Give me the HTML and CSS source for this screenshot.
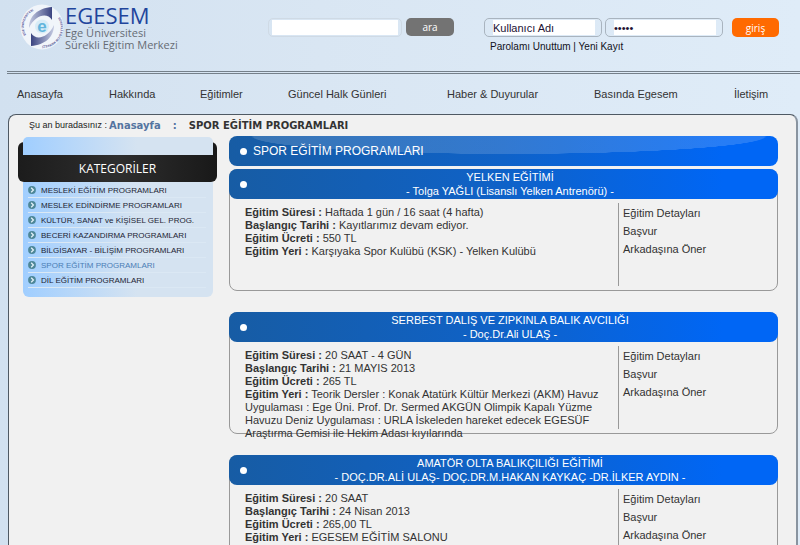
FILE: index.html
```html
<!DOCTYPE html>
<html lang="tr">
<head>
    <meta charset="UTF-8">
    <meta name="viewport" content="width=device-width, initial-scale=1.0">
    <title>EGESEM - Spor Eğitim Programları</title>
    <link rel="stylesheet" href="styles.css">
</head>
<body>
    <svg class="hidden" aria-hidden="true">
        <symbol id="arrow" viewBox="0 0 8 8">
            <circle cx="4" cy="4" r="3.9" fill="#4d8798"/>
            <path d="M3.200 1.800L5.400 4 3.200 6.200" fill="none" stroke="#e3f1f8" stroke-width="1.3"/>
        </symbol>
    </svg>

    <header class="header">
        <a class="logo" href="#">
            <svg class="logo-mark" viewBox="0 0 44 46" aria-hidden="true">
                <defs>
                    <linearGradient id="swoosh1" x1="0" y1="0" x2="1" y2="0">
                        <stop offset="0" stop-color="#c5cbe2"/>
                        <stop offset="1" stop-color="#3b4480"/>
                    </linearGradient>
                    <linearGradient id="swoosh2" x1="0" y1="0" x2="1" y2="0">
                        <stop offset="0" stop-color="#3b4480"/>
                        <stop offset="1" stop-color="#c5cbe2"/>
                    </linearGradient>
                    <path id="arcTop" d="M6 31A17.500 17.500 0 0 1 22 5"/>
                    <path id="arcBottom" d="M38 14A18 18 0 0 1 18 41"/>
                </defs>
                <ellipse cx="22" cy="23" rx="21.5" ry="22.5" fill="#f1f5fa"/>
                <path d="M9 24C9 12 18 4 32 3V16C27 8 15 11 9 24z" fill="url(#swoosh1)"/>
                <path d="M34 21C34 33 25 41 11 42V29C16 37 28 34 34 21z" fill="url(#swoosh2)"/>
                <circle cx="22" cy="22.500" r="7" fill="#d8ecf7"/>
                <text class="mark-e" x="22" y="28" text-anchor="middle">e</text>
                <text class="mark-ring"><textPath href="#arcTop">EGE ÜNİVERSİTESİ</textPath></text>
                <text class="mark-ring"><textPath href="#arcBottom">SÜREKLİ EĞİTİM MERKEZİ</textPath></text>
            </svg>
            <span class="logo-text">
                <strong>EGESEM</strong>
                <span>Ege Üniversitesi</span>
                <span>Sürekli Eğitim Merkezi</span>
            </span>
        </a>

        <form class="search">
            <div class="field field-search"><input type="text" aria-label="Arama"></div>
            <button class="btn-search" type="button">ara</button>
        </form>

        <form class="login">
            <div class="login-row">
                <div class="field"><input type="text" value="Kullanıcı Adı" aria-label="Kullanıcı Adı"></div>
                <div class="field field-pass"><input type="password" value="12345" aria-label="Parola"></div>
                <button class="btn-login" type="button">giriş</button>
            </div>
            <p class="login-links"><a href="#">Parolamı Unuttum</a> | <a href="#">Yeni Kayıt</a></p>
        </form>
    </header>

    <nav class="menu">
        <a href="#">Anasayfa</a>
        <a href="#">Hakkında</a>
        <a href="#">Eğitimler</a>
        <a href="#">Güncel Halk Günleri</a>
        <a href="#">Haber &amp; Duyurular</a>
        <a href="#">Basında Egesem</a>
        <a href="#">İletişim</a>
    </nav>

    <div class="page">
        <div class="breadcrumb">
            <span class="here">Şu an buradasınız :</span>
            <a href="#">Anasayfa</a>
            <span class="sep">:</span>
            <strong>SPOR EĞİTİM PROGRAMLARI</strong>
        </div>

        <div class="columns">
            <aside class="sidebar">
                <h2>KATEGORİLER</h2>
                <ul>
                    <li><svg><use href="#arrow"/></svg><a href="#">MESLEKİ EĞİTİM PROGRAMLARI</a></li>
                    <li><svg><use href="#arrow"/></svg><a href="#">MESLEK EDİNDİRME PROGRAMLARI</a></li>
                    <li><svg><use href="#arrow"/></svg><a href="#">KÜLTÜR, SANAT ve KİŞİSEL GEL. PROG.</a></li>
                    <li><svg><use href="#arrow"/></svg><a href="#">BECERİ KAZANDIRMA PROGRAMLARI</a></li>
                    <li><svg><use href="#arrow"/></svg><a href="#">BİLGİSAYAR - BİLİŞİM PROGRAMLARI</a></li>
                    <li><svg><use href="#arrow"/></svg><a class="active" href="#">SPOR EĞİTİM PROGRAMLARI</a></li>
                    <li><svg><use href="#arrow"/></svg><a href="#">DİL EĞİTİM PROGRAMLARI</a></li>
                </ul>
            </aside>

            <main class="content">
                <h1 class="title"><span class="dot"></span>SPOR EĞİTİM PROGRAMLARI</h1>

                <article class="course">
                    <header>
                        <span class="dot"></span>
                        <h3>YELKEN EĞİTİMİ<br>- Tolga YAĞLI (Lisanslı Yelken Antrenörü) -</h3>
                    </header>
                    <div class="course-body">
                        <div class="info">
                            <p><b>Eğitim Süresi :</b> Haftada 1 gün / 16 saat (4 hafta)</p>
                            <p><b>Başlangıç Tarihi :</b> Kayıtlarımız devam ediyor.</p>
                            <p><b>Eğitim Ücreti :</b> 550 TL</p>
                            <p><b>Eğitim Yeri :</b> Karşıyaka Spor Kulübü (KSK) - Yelken Kulübü</p>
                        </div>
                        <div class="links">
                            <a href="#">Eğitim Detayları</a>
                            <a href="#">Başvur</a>
                            <a href="#">Arkadaşına Öner</a>
                        </div>
                    </div>
                </article>

                <article class="course">
                    <header>
                        <span class="dot"></span>
                        <h3>SERBEST DALIŞ VE ZIPKINLA BALIK AVCILIĞI<br>- Doç.Dr.Ali ULAŞ -</h3>
                    </header>
                    <div class="course-body">
                        <div class="info">
                            <p><b>Eğitim Süresi :</b> 20 SAAT - 4 GÜN</p>
                            <p><b>Başlangıç Tarihi :</b> 21 MAYIS 2013</p>
                            <p><b>Eğitim Ücreti :</b> 265 TL</p>
                            <p><b>Eğitim Yeri :</b> Teorik Dersler : Konak Atatürk Kültür Merkezi (AKM) Havuz Uygulaması : Ege Üni. Prof. Dr. Sermed AKGÜN Olimpik Kapalı Yüzme Havuzu Deniz Uygulaması : URLA İskeleden hareket edecek EGESÜF Araştırma Gemisi ile Hekim Adası kıyılarında</p>
                        </div>
                        <div class="links">
                            <a href="#">Eğitim Detayları</a>
                            <a href="#">Başvur</a>
                            <a href="#">Arkadaşına Öner</a>
                        </div>
                    </div>
                </article>

                <article class="course">
                    <header>
                        <span class="dot"></span>
                        <h3>AMATÖR OLTA BALIKÇILIĞI EĞİTİMİ<br>- DOÇ.DR.ALİ ULAŞ- DOÇ.DR.M.HAKAN KAYKAÇ -DR.İLKER AYDIN -</h3>
                    </header>
                    <div class="course-body">
                        <div class="info">
                            <p><b>Eğitim Süresi :</b> 20 SAAT</p>
                            <p><b>Başlangıç Tarihi :</b> 24 Nisan 2013</p>
                            <p><b>Eğitim Ücreti :</b> 265,00 TL</p>
                            <p><b>Eğitim Yeri :</b> EGESEM EĞİTİM SALONU</p>
                        </div>
                        <div class="links">
                            <a href="#">Eğitim Detayları</a>
                            <a href="#">Başvur</a>
                            <a href="#">Arkadaşına Öner</a>
                        </div>
                    </div>
                </article>
            </main>
        </div>
    </div>
</body>
</html>
```

FILE: styles.css
```css
* {
    padding: 0;
    margin: 0;
    box-sizing: border-box;
}

:root {
    --text: #333333;
    --panel: #f1f1f1;
    --bar: linear-gradient(to right, #175ca4, #0f62c8 50%, #0066f5 90%);
}

body {
    font-family: "Liberation Sans", Arial, sans-serif;
    font-size: 11px;
    color: var(--text);
    background: linear-gradient(to right, #d2e1f0, #d9e6f3 40%, #dfecf8);
}

a {
    color: inherit;
    text-decoration: none;
}

ul {
    list-style: none;
}

.hidden {
    display: none;
}

/* header */
.header {
    display: flex;
    align-items: flex-start;
    height: 74px;
    margin-left: 7px;
    padding: 4px 21px 0 13px;
    border-bottom: 3px double #75808a;
}

.logo {
    display: flex;
    flex: 1;
    gap: 1px;
}

.logo-mark {
    width: 44px;
    height: 46px;
    overflow: visible;
}

.mark-e {
    font-size: 17px;
    font-weight: bold;
    fill: #62b5dc;
}

.mark-ring {
    font-size: 3px;
    font-weight: bold;
    fill: #4a4a90;
}

.logo-text {
    display: flex;
    flex-direction: column;
    font-family: "Open Sans", sans-serif;
    font-size: 11px;
    line-height: 12px;
    color: #666c74;
}

.logo-text strong {
    font-size: 22px;
    font-weight: normal;
    line-height: 23px;
    color: #1f459c;
}

.search {
    display: flex;
    gap: 4px;
    margin: 14px 30px 0 0;
}

.field {
    width: 118px;
    height: 19px;
    padding: 1px 6px 1px 8px;
    border: 1px solid #a9b4bf;
    border-radius: 5px;
}

.field input {
    display: block;
    width: 100%;
    height: 15px;
    border: none;
    background-color: #ffffff;
    font-family: inherit;
    font-size: 11px;
    color: #221133;
}

.field-search {
    width: 134px;
    padding: 1px 3px;
    border-color: #cfdae5;
}

button {
    height: 18px;
    border: none;
    border-radius: 5px;
    font-family: "Open Sans", sans-serif;
    font-size: 10px;
    line-height: 16px;
    color: #ffffff;
}

.btn-search {
    width: 48px;
    background-color: #737373;
}

.login {
    margin-top: 14px;
}

.login-row {
    display: flex;
    gap: 3px;
}

.btn-login {
    width: 47px;
    height: 19px;
    margin-left: 6px;
    background-color: #ff6a00;
}

.login-links {
    margin: 4px 0 0 6px;
    font-size: 10px;
    line-height: 12px;
    color: #111122;
}

/* menu */
.menu {
    display: grid;
    grid-template-columns: 92fr 91fr 88fr 159fr 147fr 140fr 66fr;
    padding: 0 0 0 17px;
    line-height: 40px;
    height: 40px;
}

/* page */
.page {
    margin: 0 2px 0 8px;
    padding: 4px 18px 20px 9px;
    border: 1px solid #4f5963;
    border-right: 2px solid #8994a0;
    border-bottom: none;
    border-radius: 8px 8px 0 0;
    background-color: var(--panel);
}

.breadcrumb {
    display: flex;
    align-items: center;
    height: 12px;
    padding-left: 11px;
    font-family: "DejaVu Sans", Verdana, sans-serif;
    font-size: 10px;
    font-weight: bold;
}

.breadcrumb .here {
    margin-right: 2px;
    font-family: "Liberation Sans", Arial, sans-serif;
    font-size: 9px;
    font-weight: normal;
    color: #222222;
}

.breadcrumb a,
.breadcrumb .sep {
    margin-right: 12px;
    color: #5474a0;
}

.columns {
    display: flex;
    align-items: flex-start;
    gap: 12px;
    padding-top: 5px;
}

/* sidebar */
.sidebar {
    width: 199px;
    padding-top: 6px;
}

.sidebar h2 {
    position: relative;
    height: 40px;
    padding-top: 13px;
    border-radius: 6px;
    background: linear-gradient(to right, #1c1c1c, #2e2e2e 50%, #191919);
    font-family: "Open Sans", sans-serif;
    font-size: 12px;
    font-weight: normal;
    line-height: 27px;
    text-align: center;
    color: #ffffff;
}

/* light tab over the top of the black heading */
.sidebar h2::before {
    content: "";
    position: absolute;
    top: -5px;
    left: 5px;
    right: 4px;
    height: 18px;
    border-radius: 5px 5px 0 0;
    background: linear-gradient(to right, #a0ceff, #d5e3f1 60%);
}

.sidebar ul {
    margin: 0 4px 0 5px;
    padding: 1px 7px 9px 5px;
    border-radius: 0 0 6px 6px;
    background: linear-gradient(to right, #a0ceff, #d5e3f1 60%);
}

.sidebar li {
    display: flex;
    align-items: center;
    gap: 5px;
    height: 15px;
    border-bottom: 1px solid #dbe8f4;
    font-size: 8px;
    white-space: nowrap;
    color: #1c2433;
}

.sidebar li svg {
    flex: none;
    width: 8px;
    height: 8px;
}

.sidebar .active {
    color: #4a7db5;
}

/* content */
.content {
    flex: 1;
}

.dot {
    width: 7px;
    height: 7px;
    border-radius: 50%;
    background-color: #ffffff;
}

.title {
    display: flex;
    align-items: center;
    gap: 6px;
    height: 30px;
    margin-bottom: 3px;
    padding-left: 11px;
    border-radius: 8px;
    background: radial-gradient(ellipse 47% 18px at 51% 0, rgba(255, 255, 255, 0.15) 99%, transparent), var(--bar);
    font-size: 12px;
    font-weight: normal;
    color: #ffffff;
}

.course {
    height: 122px;
    margin-bottom: 21px;
    border: 1px solid #999999;
    border-radius: 8px;
}

.course header {
    display: flex;
    align-items: center;
    height: 30px;
    margin: -1px -1px 0;
    padding: 0 5px 0 11px;
    border-radius: 8px;
    background: var(--bar);
    color: #ffffff;
}

.course h3 {
    flex: 1;
    font-size: 11px;
    font-weight: normal;
    line-height: 14px;
    text-align: center;
}

.course-body {
    display: flex;
    padding: 4px 0 0 15px;
}

.info {
    flex: 1;
    height: 83px;
    padding: 3px 5px 0 0;
    font-size: 11px;
    line-height: 13px;
}

.links {
    width: 159px;
    height: 83px;
    padding: 1px 0 0 4px;
    border-left: 1px solid #999999;
    line-height: 18px;
}

.links a {
    display: block;
}
```
